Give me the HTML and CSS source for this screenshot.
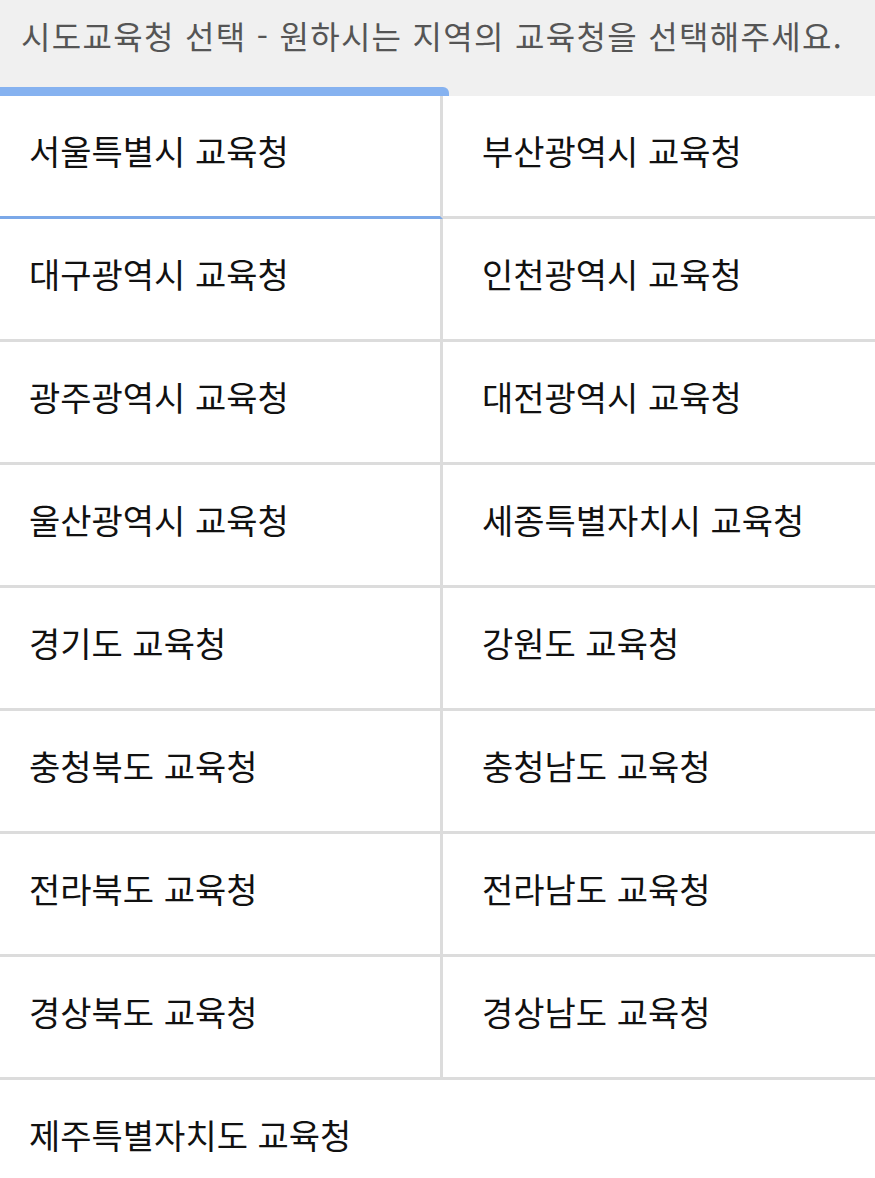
FILE: index.html
```html
<!DOCTYPE html>
<html lang="ko">
<head>
<meta charset="utf-8">
<title>시도교육청 선택</title>
<link rel="stylesheet" href="styles.css">
</head>
<body>
<header class="head">시도교육청 선택 - 원하시는 지역의 교육청을 선택해주세요.</header>
<div class="tabbar"><span class="tab"></span></div>
<ul class="grid">
  <li class="cell left active">서울특별시 교육청</li>
  <li class="cell right">부산광역시 교육청</li>
  <li class="cell left">대구광역시 교육청</li>
  <li class="cell right">인천광역시 교육청</li>
  <li class="cell left">광주광역시 교육청</li>
  <li class="cell right">대전광역시 교육청</li>
  <li class="cell left">울산광역시 교육청</li>
  <li class="cell right">세종특별자치시 교육청</li>
  <li class="cell left">경기도 교육청</li>
  <li class="cell right">강원도 교육청</li>
  <li class="cell left">충청북도 교육청</li>
  <li class="cell right">충청남도 교육청</li>
  <li class="cell left">전라북도 교육청</li>
  <li class="cell right">전라남도 교육청</li>
  <li class="cell left">경상북도 교육청</li>
  <li class="cell right">경상남도 교육청</li>
  <li class="cell full">제주특별자치도 교육청</li>
</ul>
</body>
</html>
```

FILE: styles.css
```css
html, body {
  margin: 0;
  padding: 0;
  background: #ffffff;
}
body {
  font-family: "Noto Sans CJK KR", "Noto Sans", sans-serif;
  width: 875px;
  overflow: hidden;
}
.head {
  background: #f0f0f0;
  color: #555555;
  font-size: 32px;
  letter-spacing: 1.3px;
  line-height: 40px;
  height: 87px;
  padding: 15px 0 0 21px;
  box-sizing: border-box;
  white-space: nowrap;
}
.tabbar {
  background: #f0f0f0;
  height: 9px;
  display: flex;
}
.tab {
  width: 449px;
  height: 9px;
  background: #86b2f0;
  border-top-right-radius: 6px;
}
.grid {
  list-style: none;
  margin: 0;
  padding: 0;
  display: grid;
  grid-template-columns: 443px 432px;
}
.cell {
  border-bottom: 3px solid #dcdcdc;
  font-size: 34px;
  color: #111111;
  display: flex;
  align-items: center;
  padding-bottom: 12px;
  height: 108px;
  white-space: nowrap;
}
.left {
  border-right: 3px solid #dcdcdc;
  padding-left: 29px;
}
.right {
  padding-left: 39px;
}
.active {
  border-bottom-color: #7ba8e8;
}
.full {
  grid-column: 1 / -1;
  padding-left: 29px;
  border-bottom: none;
}
```
